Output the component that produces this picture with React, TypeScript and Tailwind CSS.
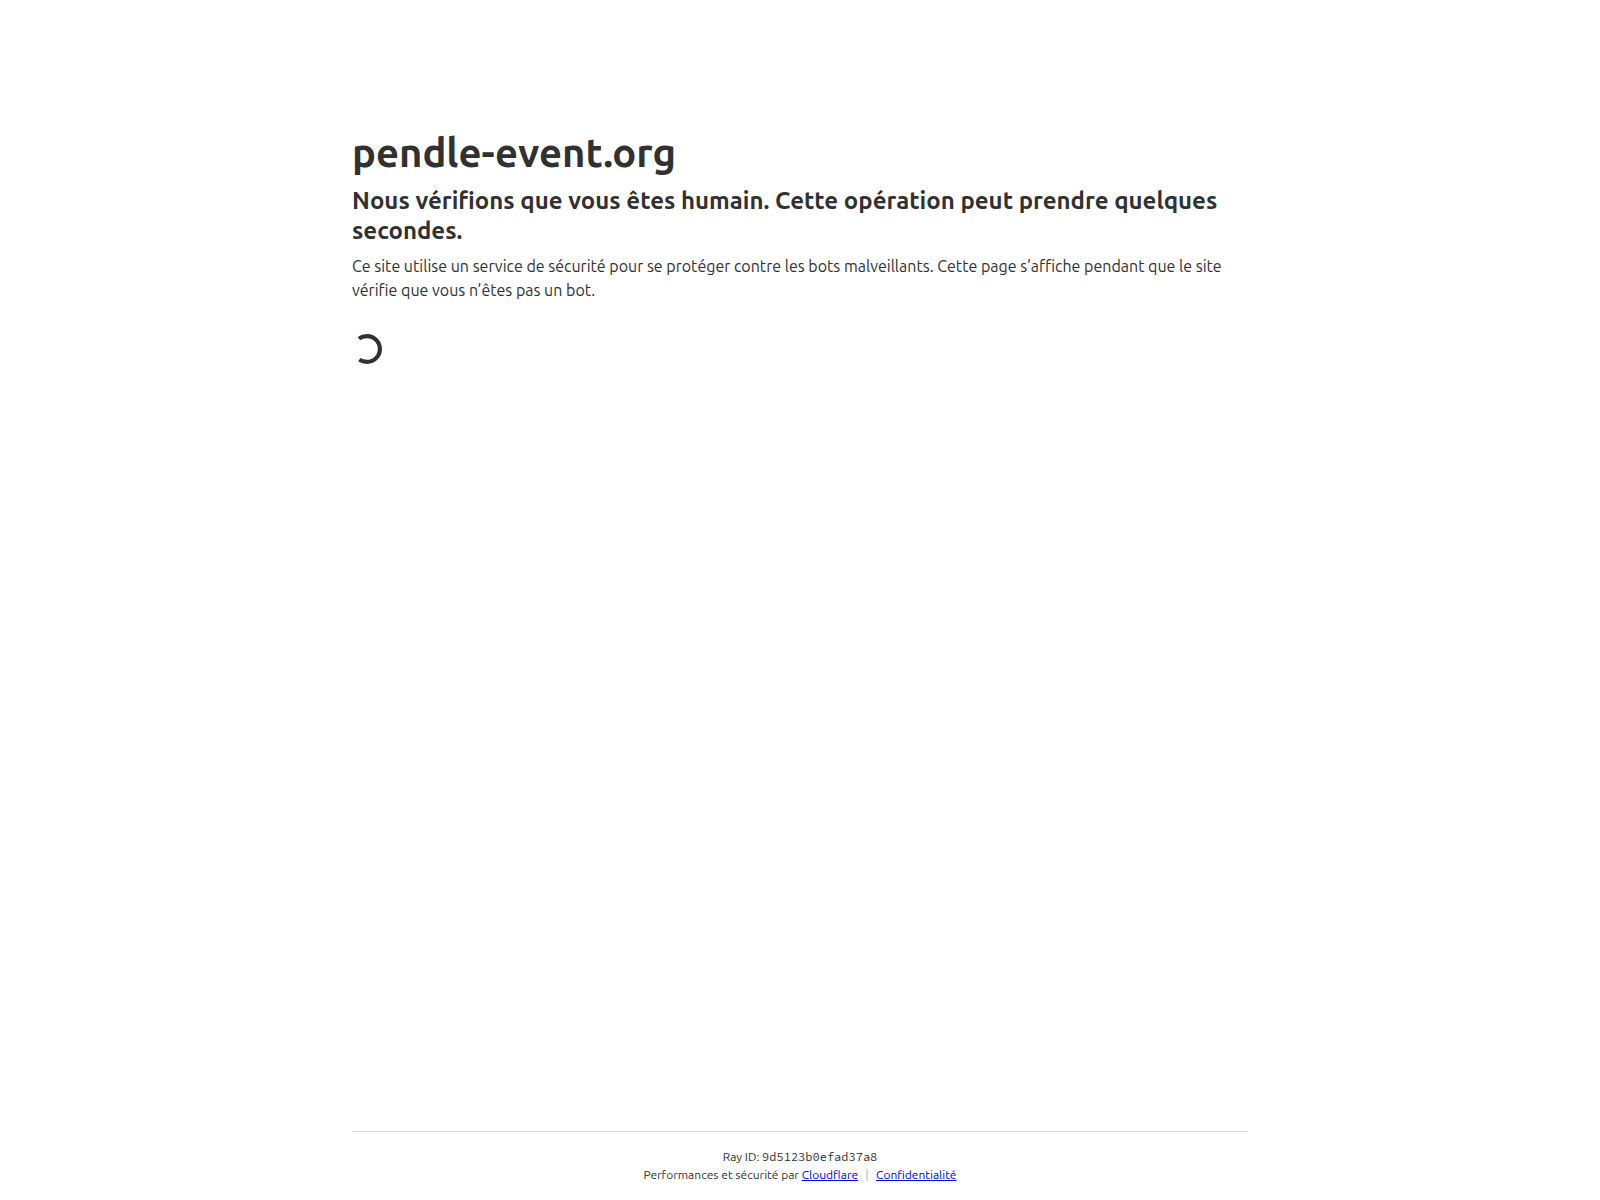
function Spinner() {
  return (
    <svg
      className="size-[30px] text-[#313131]"
      viewBox="0 0 30 30"
      fill="none"
      role="status"
      aria-label="Chargement"
    >
      <path
        d="M6.900 4.600Q10.300 2.100 15 2.100A12.900 12.900 0 0 1 15 27.900Q10.800 27.900 7.300 25.800"
        stroke="currentColor"
        strokeWidth="4.2"
      />
    </svg>
  )
}

export default function App() {
  return (
    <div className="flex min-h-screen flex-col bg-white font-['Ubuntu','Noto_Sans',sans-serif] text-[#313131]">
      <main className="mx-auto w-full max-w-[944px] flex-1 px-6 pt-32">
        <h1 className="text-[40px] leading-[50px] font-semibold">pendle-event.org</h1>
        <h2 className="mt-2 text-2xl leading-[30px] font-semibold">
          Nous vérifions que vous êtes humain. Cette opération peut prendre quelques secondes.
        </h2>
        <p className="mt-2 text-base leading-6">
          Ce site utilise un service de sécurité pour se protéger contre les bots malveillants. Cette page s’affiche pendant que le site vérifie que vous n’êtes pas un bot.
        </p>
        <div className="mt-8">
          <Spinner />
        </div>
      </main>

      <footer className="mx-auto w-full max-w-[944px] px-6 text-center text-xs leading-[18px]">
        <div className="border-t border-[#d9d9d9] py-4">
          <div className="h-[18px]">
            Ray ID: <code className="font-['Source_Code_Pro','DejaVu_Sans_Mono',monospace] text-xs leading-[18px]">9d5123b0efad37a8</code>
          </div>
          <div>
            <span>
              Performances et sécurité par{" "}
              <a href="#cloudflare" className="text-[#0000ee] underline">Cloudflare</a>
            </span>
            <span className="ml-2 inline-block border-l-2 border-[#d9d9d9] pl-2 leading-3">
              <a href="#privacy" className="text-[#0000ee] underline">Confidentialité</a>
            </span>
          </div>
        </div>
      </footer>
    </div>
  )
}
